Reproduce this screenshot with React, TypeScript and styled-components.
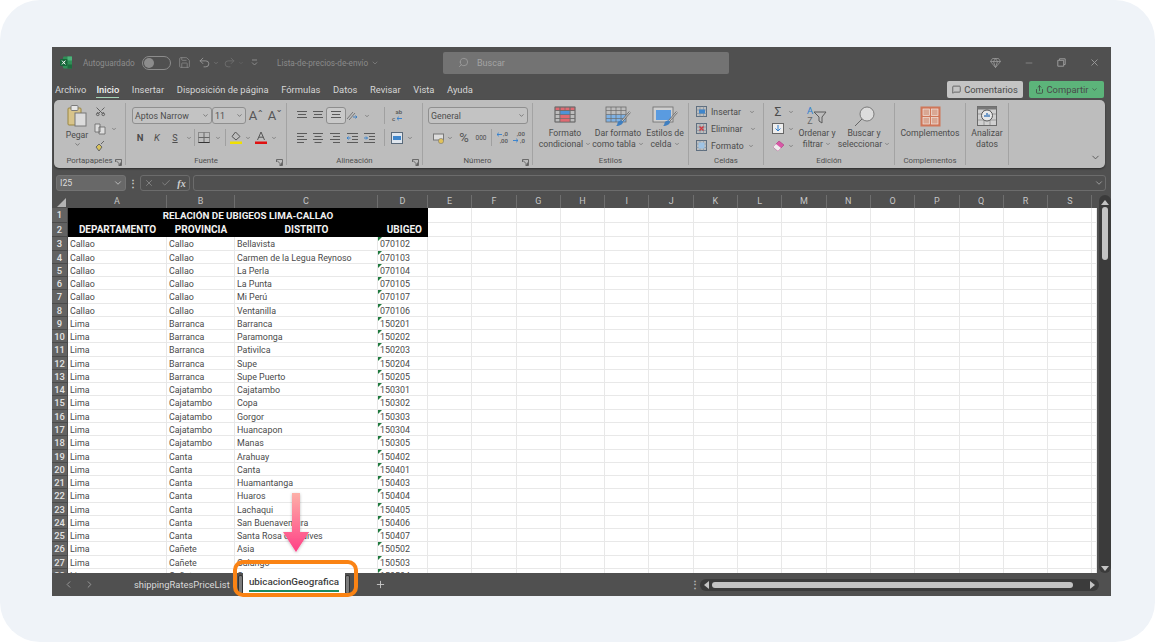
import styled, { createGlobalStyle } from 'styled-components';
import {
  ChevronDown,
  ChevronLeft,
  ChevronRight,
  Check,
  Minus,
  MessageSquare,
  Plus,
  Redo2,
  Save,
  Scissors,
  Search,
  Share,
  Undo2,
  X,
} from 'lucide-react';

const UI_FONT = `"Roboto", "Noto Sans", sans-serif`;

const GlobalStyle = createGlobalStyle`
  html, body { margin: 0; padding: 0; background: #fff; }
  * { box-sizing: border-box; }
  #root { width: 1155px; height: 642px; overflow: hidden; }
`;

const Card = styled.div`
  width: 1155px;
  height: 642px;
  padding: 47px 44px 46px 52px;
  background: #eff3f8;
  border-radius: 40px;
  position: relative;
`;

const Excel = styled.div`
  width: 1059px;
  height: 549px;
  display: flex;
  flex-direction: column;
  background: #505050;
  font-family: ${UI_FONT};
  overflow: hidden;
`;

/* title bar */
const TitleBar = styled.div`
  height: 31px;
  flex: none;
  display: flex;
  align-items: center;
`;
const TitleLeft = styled.div`
  width: 391px;
  display: flex;
  align-items: center;
  padding-left: 8px;
  color: #8c8c8c;
`;
const AutoSave = styled.span`
  width: 59px;
  margin-left: 11px;
  font-size: 8.2px;
  white-space: nowrap;
`;
const Toggle = styled.span`
  width: 29px;
  height: 14px;
  flex: none;
  border: 1px solid #8c8c8c;
  border-radius: 7px;
  padding: 1px;
  display: flex;
  &::before {
    content: '';
    width: 10px;
    height: 10px;
    border-radius: 50%;
    background: #8c8c8c;
  }
`;
const DocName = styled.span`
  margin-left: 14px;
  font-size: 8.2px;
  color: #8a8a8a;
  white-space: nowrap;
  display: flex;
  align-items: center;
  gap: 3px;
`;
const SearchBox = styled.div`
  width: 286px;
  height: 22px;
  background: #737373;
  border-radius: 2px;
  display: flex;
  align-items: center;
  gap: 8px;
  padding-left: 15px;
  font-size: 9px;
  color: #a4a4a4;
`;
const SearchIcon = styled(Search)`
  transform: scaleX(-1);
`;
const TitleRight = styled.div`
  flex: 1;
  display: flex;
  justify-content: flex-end;
  color: #9a9a9a;
`;

/* menu tabs */
const MenuBar = styled.div`
  height: 22px;
  flex: none;
  display: flex;
  align-items: center;
  padding: 0 7px 0 3px;
`;
const MenuTab = styled.span<{ $active?: boolean }>`
  margin-right: 12.6px;
  height: 17px;
  font-size: 9.4px;
  line-height: 17px;
  white-space: nowrap;
  color: ${(p) => (p.$active ? '#f0f0f0' : '#d6d6d6')};
  font-weight: ${(p) => (p.$active ? 500 : 400)};
  border-bottom: ${(p) => (p.$active ? '1px solid #a4d3b5' : 'none')};
  &:first-child {
    margin-right: 10px;
  }
`;
const MenuActions = styled.div`
  margin-left: auto;
  display: flex;
  gap: 6px;
`;
const MenuButton = styled.div<{ $green?: boolean }>`
  height: 17px;
  width: ${(p) => (p.$green ? 75 : 76)}px;
  border-radius: 2px;
  display: flex;
  align-items: center;
  justify-content: center;
  gap: 3px;
  font-size: 9.4px;
  color: #4a4a4a;
  background: ${(p) => (p.$green ? '#5cb47a' : '#c4c4c4')};
`;

/* ribbon */
const Ribbon = styled.div`
  height: 68px;
  flex: none;
  margin: 0 6px 0 2px;
  background: #bdbdbd;
  border-radius: 5px;
  display: flex;
  color: #4c4c4c;
  box-shadow: 0 1px 2px rgba(0, 0, 0, 0.45);
`;
const Group = styled.section<{ $w: number }>`
  width: ${(p) => p.$w}px;
  flex: none;
  margin: 3px 0;
  border-right: 1px solid #a3a3a3;
  display: flex;
  flex-direction: column;
  position: relative;
`;
const GroupBody = styled.div`
  flex: 1;
  min-height: 0;
  display: flex;
`;
const GroupLabel = styled.div`
  height: 14px;
  flex: none;
  margin-bottom: -3px;
  text-align: center;
  font-size: 7.8px;
  line-height: 13px;
  color: #4f4f4f;
`;
const Launcher = styled.svg`
  position: absolute;
  right: 3px;
  bottom: -1px;
  width: 7px;
  height: 7px;
`;
const Rows = styled.div<{ $pad?: number }>`
  display: flex;
  flex-direction: column;
  gap: 5px;
  padding: 4px 0 0 ${(p) => p.$pad ?? 0}px;
`;
const Row = styled.div<{ $pad?: number }>`
  height: 17px;
  display: flex;
  align-items: center;
  padding-left: ${(p) => p.$pad ?? 0}px;
`;
const Slot = styled.span<{ $w: number; $on?: boolean }>`
  width: ${(p) => p.$w}px;
  height: 17px;
  flex: none;
  display: flex;
  align-items: center;
  justify-content: center;
  font-size: 9px;
  color: #4c4c4c;
  ${(p) =>
    p.$on
      ? 'background:#c9c9c9;border:1px solid #8d8d8d;border-radius:3px;'
      : ''}
`;
const Sep = styled.span<{ $w: number }>`
  width: ${(p) => p.$w}px;
  height: 17px;
  flex: none;
  display: flex;
  justify-content: center;
  &::before {
    content: '';
    width: 1px;
    background: #a0a0a0;
  }
`;
const Select = styled.div<{ $w: number }>`
  width: ${(p) => p.$w}px;
  height: 17px;
  flex: none;
  border: 1px solid #8f8f8f;
  border-radius: 3px;
  background: #c3c3c3;
  display: flex;
  align-items: center;
  justify-content: space-between;
  padding: 0 2px;
  font-size: 8.8px;
  white-space: nowrap;
  color: #4c4c4c;
`;
const BoldLetter = styled.b<{ $serif?: boolean }>`
  font-size: 9.5px;
  font-weight: ${(p) => (p.$serif ? 400 : 700)};
  font-style: ${(p) => (p.$serif ? 'italic' : 'normal')};
`;
const Glyph = styled.span`
  font-size: 13px;
  color: #555;
`;
const TinyStack = styled.span`
  display: flex;
  flex-direction: column;
  align-items: flex-end;
  font-size: 6px;
  line-height: 6.5px;
  font-weight: 500;
  color: #555;
`;
const TinyRow = styled.span`
  display: flex;
  align-items: center;
  gap: 1px;
`;
const Thousands = styled.span`
  font-size: 6.5px;
`;
const SortLetters = styled.span`
  display: flex;
  flex-direction: column;
  align-items: center;
  font-family: 'Noto Sans', sans-serif;
  font-size: 9.5px;
  line-height: 10px;
`;
const SortLetter = styled.span<{ $blue?: boolean }>`
  color: ${(p) => (p.$blue ? '#2f7fd0' : '#666')};
`;
const BigButton = styled.div<{ $w: number }>`
  width: ${(p) => p.$w}px;
  flex: none;
  display: flex;
  flex-direction: column;
  align-items: center;
  padding-top: 3px;
`;
const BigIcon = styled.div`
  height: 22px;
  flex: none;
  display: flex;
  align-items: flex-start;
  justify-content: center;
`;
const BigText = styled.div`
  font-size: 8.7px;
  line-height: 11.3px;
  text-align: center;
  white-space: nowrap;
  color: #4c4c4c;
  display: flex;
  flex-direction: column;
  align-items: center;
`;
const CellAction = styled.div`
  height: 17.5px;
  display: flex;
  align-items: center;
  font-size: 8.7px;
  white-space: nowrap;
  color: #4c4c4c;
  gap: 4px;
`;
const PasteButton = styled.div`
  width: 30px;
  margin-left: 8px;
  flex: none;
  display: flex;
  flex-direction: column;
  align-items: center;
  font-size: 8.7px;
  padding-top: 2px;
  color: #4c4c4c;
`;
const PasteLabel = styled.span`
  margin-top: 3px;
  line-height: 11px;
`;
const CutIcon = styled(Scissors)`
  transform: rotate(-90deg);
`;
const StackColumn = styled.div<{ $pad?: number; $w?: number }>`
  width: ${(p) => (p.$w ? `${p.$w}px` : 'auto')};
  flex: none;
  display: flex;
  flex-direction: column;
  padding-left: ${(p) => p.$pad ?? 0}px;
`;
const Sigma = styled.span`
  font-size: 12px;
`;
const RibbonEnd = styled.div`
  flex: 1;
  display: flex;
  align-items: flex-end;
  justify-content: flex-end;
  padding: 0 4px 5px 0;
`;

/* formula bar */
const FormulaBar = styled.div`
  height: 27px;
  flex: none;
  display: flex;
  align-items: flex-start;
  padding: 7px 5px 0 4px;
  color: #8a8a8a;
`;
const NameBox = styled.div`
  width: 70px;
  height: 16px;
  flex: none;
  background: #686868;
  border: 1px solid #737373;
  border-radius: 3px;
  display: flex;
  align-items: center;
  justify-content: space-between;
  padding: 0 2px 0 3px;
  font-size: 8.8px;
  color: #dcdcdc;
`;
const DotsSlot = styled.div`
  width: 14px;
  height: 16px;
  flex: none;
  display: flex;
  align-items: center;
  justify-content: center;
  color: #c8c8c8;
  font-size: 10px;
  font-weight: 700;
`;
const FormulaActions = styled.div`
  width: 50px;
  height: 16px;
  flex: none;
  border: 1px solid #6c6c6c;
  border-radius: 3px;
  display: flex;
  align-items: center;
  justify-content: space-around;
  font-family: 'Liberation Serif', serif;
  font-style: italic;
  font-weight: 700;
  font-size: 10px;
  color: #d0d0d0;
`;
const FormulaInput = styled.div`
  flex: 1;
  height: 16px;
  margin-left: 3px;
  border: 1px solid #6c6c6c;
  border-radius: 3px;
  display: flex;
  align-items: center;
  justify-content: flex-end;
  padding-right: 1px;
`;

/* sheet */
const SheetArea = styled.div`
  flex: 1;
  min-height: 0;
  display: flex;
`;
const Sheet = styled.div`
  flex: 1;
  min-width: 0;
  overflow: hidden;
`;
const COLUMNS = '16px 99px 68px 143px 50px repeat(15, 44.3px) 5px';
const HeaderRow = styled.div`
  height: 13px;
  display: grid;
  grid-template-columns: ${COLUMNS};
  background: #505050;
`;
const Corner = styled.div`
  position: relative;
  &::after {
    content: '';
    position: absolute;
    right: 2px;
    bottom: 1px;
    border-left: 9px solid transparent;
    border-bottom: 9px solid #b5b5b5;
  }
`;
const ColHead = styled.div`
  border-right: 1px solid #6e6e6e;
  text-align: center;
  font-size: 9px;
  line-height: 13px;
  color: #c6c6c6;
`;
const SheetRow = styled.div<{ $h: number }>`
  height: ${(p) => p.$h}px;
  display: grid;
  grid-template-columns: ${COLUMNS};
  grid-template-rows: minmax(0, 1fr);
`;
const RowHead = styled.div`
  background: #626262;
  border-bottom: 1px solid #4a4a4a;
  border-right: 1px solid #4a4a4a;
  color: #e2e2e2;
  font-size: 9.4px;
  font-weight: 500;
  line-height: 13px;
  text-align: center;
`;
const Cell = styled.div<{ $flag?: boolean }>`
  background: #fff;
  border-right: 1px solid #e8e8e8;
  border-bottom: 1px solid #e8e8e8;
  font-size: 8.9px;
  line-height: 14.5px;
  padding-left: 2px;
  color: #4a4a4a;
  white-space: nowrap;
  overflow: ${(p) => (p.$flag ? 'hidden' : 'visible')};
  position: relative;
  &::before {
    content: '';
    display: ${(p) => (p.$flag ? 'block' : 'none')};
    position: absolute;
    left: 0;
    top: 0;
    border-top: 4px solid #1f7a3e;
    border-right: 4px solid transparent;
  }
`;
const TitleCell = styled.div`
  grid-column: 2 / 6;
  background: #000;
  color: #f2f2f2;
  text-align: center;
  font-size: 9.8px;
  font-weight: 700;
  line-height: 15px;
`;
const HeadCell = styled.div<{ $right?: boolean }>`
  background: #000;
  color: #f2f2f2;
  text-align: ${(p) => (p.$right ? 'right' : 'center')};
  padding-right: ${(p) => (p.$right ? 6 : 0)}px;
  font-size: 10px;
  font-weight: 700;
  line-height: 14px;
  white-space: nowrap;
`;
const VScroll = styled.div`
  width: 14px;
  flex: none;
  padding-left: 2px;
`;
const VTrack = styled.div`
  height: 100%;
  background: #3b3b3b;
  border-radius: 6px;
  display: flex;
  flex-direction: column;
  align-items: center;
  padding: 5px 0 2px;
  gap: 2px;
`;
const VThumb = styled.div`
  width: 6px;
  height: 53px;
  border-radius: 3px;
  background: #c4c4c4;
`;
const ScrollArrow = styled.span<{ $dir: 'up' | 'down' | 'left' | 'right' }>`
  width: 0;
  height: 0;
  flex: none;
  ${(p) => {
    if (p.$dir === 'up') return 'border-left:4px solid transparent;border-right:4px solid transparent;border-bottom:5px solid #c4c4c4;';
    if (p.$dir === 'down') return 'border-left:4px solid transparent;border-right:4px solid transparent;border-top:5px solid #c4c4c4;margin-top:auto;';
    if (p.$dir === 'left') return 'border-top:4px solid transparent;border-bottom:4px solid transparent;border-right:5px solid #c4c4c4;';
    return 'border-top:4px solid transparent;border-bottom:4px solid transparent;border-left:5px solid #c4c4c4;margin-left:auto;';
  }}
`;

/* bottom bar */
const TabBar = styled.div`
  height: 23px;
  flex: none;
  display: flex;
  align-items: flex-end;
  background: #505050;
  color: #9c9c9c;
  position: relative;
`;
const NavArrows = styled.div`
  width: 82px;
  height: 23px;
  padding-left: 11px;
  display: flex;
  align-items: center;
  gap: 10px;
`;
const SheetTab = styled.div`
  width: 95px;
  height: 23px;
  font-size: 9.4px;
  line-height: 23px;
  color: #dadada;
  white-space: nowrap;
`;
const TabHandle = styled.span`
  width: 5px;
  height: 19px;
  margin-bottom: 2px;
  flex: none;
  background: #7c7c7c;
  border: 1px solid #333;
  border-radius: 2px;
`;
const ActiveTab = styled.div`
  width: 102px;
  height: 26px;
  flex: none;
  margin-top: -3px;
  padding: 5px 5px 0;
  background: #fff;
  color: #3e3e3e;
  font-size: 9.8px;
  font-weight: 500;
  line-height: 14px;
  text-align: center;
  white-space: nowrap;
  z-index: 1;
  display: flex;
  flex-direction: column;
  align-items: center;
  &::after {
    content: '';
    width: 90px;
    height: 2px;
    margin-top: 1px;
    background: #1b8a5f;
  }
`;
const AddSheet = styled.div`
  width: 33px;
  height: 23px;
  margin-left: 14px;
  display: flex;
  align-items: center;
  justify-content: center;
  color: #c8c8c8;
`;
const HScrollDots = styled.div`
  margin-left: auto;
  width: 11px;
  height: 23px;
  display: flex;
  align-items: center;
  justify-content: center;
  font-size: 10px;
  font-weight: 700;
  color: #b8b8b8;
`;
const HScroll = styled.div`
  width: 399px;
  height: 12px;
  margin: 0 12px 5px 0;
  background: #3b3b3b;
  border-radius: 6px;
  display: flex;
  align-items: center;
  padding: 0 4px;
  gap: 3px;
`;
const HThumb = styled.div`
  width: 361px;
  height: 6px;
  border-radius: 3px;
  background: #c4c4c4;
`;

/* annotation over the screenshot */
const Highlight = styled.div`
  position: absolute;
  left: 233px;
  top: 560px;
  width: 125px;
  height: 37px;
  border: 4px solid #fa8314;
  border-radius: 10px;
  z-index: 3;
`;
const ArrowMark = styled.svg`
  position: absolute;
  left: 281px;
  top: 491px;
  z-index: 4;
  overflow: visible;
`;

/* icons */
const Chev = ({ s = 7, c = '#4c4c4c' }: { s?: number; c?: string }) => (
  <ChevronDown size={s} color={c} strokeWidth={2} />
);

const Lines = ({ w, align = 'left' }: { w: number[]; align?: 'left' | 'center' | 'right' }) => (
  <svg width="12" height="11" viewBox="0 0 12 11">
    {w.map((len, i) => {
      const x = align === 'left' ? 1 : align === 'right' ? 11 - len : 6 - len / 2;
      return <rect key={i} x={x} y={1 + i * 3} width={len} height="1" fill="#5a5a5a" />;
    })}
  </svg>
);

const IndentLines = ({ flip }: { flip?: boolean }) => (
  <svg width="13" height="11" viewBox="0 0 13 11">
    <rect x="1" y="1" width="11" height="1" fill="#5a5a5a" />
    <rect x="6" y="4" width="6" height="1" fill="#5a5a5a" />
    <rect x="6" y="7" width="6" height="1" fill="#5a5a5a" />
    <rect x="1" y="10" width="11" height="1" fill="#5a5a5a" />
    <path d={flip ? 'M1 6h3.5M3 4.5 4.5 6 3 7.5' : 'M4.5 6H1M2.5 4.5 1 6l1.5 1.5'} stroke="#2f7fd0" strokeWidth="0.9" fill="none" />
  </svg>
);

const SmallArrow = ({ flip }: { flip?: boolean }) => (
  <svg width="6" height="5" viewBox="0 0 6 5">
    <path d={flip ? 'M0 2.5h5M3.2 .8 5 2.5 3.2 4.2' : 'M6 2.5H1M2.8 .8 1 2.5l1.8 1.7'} stroke="#2f7fd0" strokeWidth="0.9" fill="none" />
  </svg>
);

const TableGrid = ({ fill, y, h, stroke = '#6c6c6c' }: { fill: string; y: number; h: number; stroke?: string }) => (
  <>
    <rect x="1" y={y} width="20" height={h} fill={fill} />
    <rect x="1" y="1" width="20" height="15" fill="none" stroke={stroke} strokeWidth="0.8" />
    <path d="M1 4.5h20M1 8.5h20M1 12.5h20M6 1v15M11 1v15M16 1v15" stroke={stroke} strokeWidth="0.7" fill="none" />
  </>
);

const Brush = () => (
  <>
    <path d="M25 6 17 15" stroke="#6a6a6a" strokeWidth="2" />
    <path d="M25 6 17 15" stroke="#e8e8e8" strokeWidth="0.8" />
    <path d="M13 16c2-2 5-2 5 0s-3 4-7 4c2-1 1-3 2-4z" fill="#3f7fc0" />
  </>
);

const ExcelLogo = () => (
  <svg width="12" height="13" viewBox="0 0 12 13">
    <rect x="3" y="0.5" width="9" height="12" rx="1" fill="#2f8f57" />
    <rect x="7.5" y="0.5" width="4.5" height="4" fill="#4cb37a" />
    <rect x="7.5" y="8.5" width="4.5" height="4" fill="#1c6b3d" />
    <rect x="0" y="3" width="7.5" height="7" rx="1" fill="#17663a" />
    <path d="M2 4.6 5.4 8.4M5.4 4.6 2 8.4" stroke="#fff" strokeWidth="1" />
  </svg>
);

const Launch = () => (
  <Launcher viewBox="0 0 7 7">
    <path d="M0.5 3V0.5H6.5V6.5H4M1 1.5 5.5 6M5.5 3.5V6H3" stroke="#555" strokeWidth="0.8" fill="none" />
  </Launcher>
);

const SheetIcon = ({ kind }: { kind: 'ins' | 'del' | 'fmt' }) => (
  <svg width="11" height="11" viewBox="0 0 11 11">
    <rect x="0.5" y="0.5" width="10" height="10" fill="none" stroke="#5f6f80" />
    <path d="M0.5 4h10M0.5 7.5h10M4 .5v10M7.5 .5v10" stroke="#7a8a99" strokeWidth="0.6" />
    {kind === 'ins' && <rect x="3" y="3.5" width="6" height="4" fill="#3f86cc" />}
    {kind === 'del' && <path d="M3.5 3.5 7.5 7.5M7.5 3.5 3.5 7.5" stroke="#d0383f" strokeWidth="1.4" />}
    {kind === 'fmt' && <rect x="2.5" y="2.5" width="6" height="6" fill="#9fc3e4" />}
  </svg>
);

type Place = { a: string; b: string; c: string; d: string };

const PLACES: Place[] = [
  ['Callao', 'Callao', 'Bellavista', '070102'],
  ['Callao', 'Callao', 'Carmen de la Legua Reynoso', '070103'],
  ['Callao', 'Callao', 'La Perla', '070104'],
  ['Callao', 'Callao', 'La Punta', '070105'],
  ['Callao', 'Callao', 'Mi Perú', '070107'],
  ['Callao', 'Callao', 'Ventanilla', '070106'],
  ['Lima', 'Barranca', 'Barranca', '150201'],
  ['Lima', 'Barranca', 'Paramonga', '150202'],
  ['Lima', 'Barranca', 'Pativilca', '150203'],
  ['Lima', 'Barranca', 'Supe', '150204'],
  ['Lima', 'Barranca', 'Supe Puerto', '150205'],
  ['Lima', 'Cajatambo', 'Cajatambo', '150301'],
  ['Lima', 'Cajatambo', 'Copa', '150302'],
  ['Lima', 'Cajatambo', 'Gorgor', '150303'],
  ['Lima', 'Cajatambo', 'Huancapon', '150304'],
  ['Lima', 'Cajatambo', 'Manas', '150305'],
  ['Lima', 'Canta', 'Arahuay', '150402'],
  ['Lima', 'Canta', 'Canta', '150401'],
  ['Lima', 'Canta', 'Huamantanga', '150403'],
  ['Lima', 'Canta', 'Huaros', '150404'],
  ['Lima', 'Canta', 'Lachaqui', '150405'],
  ['Lima', 'Canta', 'San Buenaventura', '150406'],
  ['Lima', 'Canta', 'Santa Rosa de Quives', '150407'],
  ['Lima', 'Cañete', 'Asia', '150502'],
  ['Lima', 'Cañete', 'Calango', '150503'],
  ['Lima', 'Cañete', 'Cerro Azul', '150504'],
].map(([a, b, c, d]) => ({ a, b, c, d }));

const COLUMN_LETTERS = 'ABCDEFGHIJKLMNOPQRS'.split('');
const EMPTY_COLUMNS = Array.from({ length: 16 });

export default function App() {
  return (
    <>
      <GlobalStyle />
      <Card>
        <Excel>
          <TitleBar>
            <TitleLeft>
              <ExcelLogo />
              <AutoSave>Autoguardado</AutoSave>
              <Toggle />
              <Slot $w={26}><Save size={13} color="#8c8c8c" strokeWidth={1.4} /></Slot>
              <Slot $w={14}><Undo2 size={13} color="#9a9a9a" strokeWidth={1.6} /></Slot>
              <Slot $w={10}><Chev s={6} c="#8c8c8c" /></Slot>
              <Slot $w={16}><Redo2 size={13} color="#6f6f6f" strokeWidth={1.6} /></Slot>
              <Slot $w={8}><Chev s={6} c="#6f6f6f" /></Slot>
              <Slot $w={18}>
                <svg width="7" height="7" viewBox="0 0 7 7">
                  <path d="M1 1h5M1 3.5 3.5 6 6 3.5" stroke="#8c8c8c" fill="none" />
                </svg>
              </Slot>
              <DocName>Lista-de-precios-de-envío <Chev s={8} c="#8a8a8a" /></DocName>
            </TitleLeft>
            <SearchBox>
              <SearchIcon size={11} color="#9a9a9a" />
              Buscar
            </SearchBox>
            <TitleRight>
              <Slot $w={33}>
                <svg width="11" height="10" viewBox="0 0 11 10">
                  <path d="M2.5 0.5h6l2 3-5 6-5-6zM0.5 3.5h10M3.5 3.5l2 6 2-6M3.5 3.5l2-3 2 3" stroke="#9a9a9a" strokeWidth="0.8" fill="none" />
                </svg>
              </Slot>
              <Slot $w={33}><Minus size={10} color="#8c8c8c" /></Slot>
              <Slot $w={33}>
                <svg width="9" height="9" viewBox="0 0 9 9">
                  <path d="M2.5 2V.8h5.7v5.7H7M.8 2.3h5.9v5.9H.8z" stroke="#9a9a9a" fill="none" />
                </svg>
              </Slot>
              <Slot $w={33}><X size={11} color="#9a9a9a" /></Slot>
            </TitleRight>
          </TitleBar>

          <MenuBar>
            <MenuTab>Archivo</MenuTab>
            <MenuTab $active>Inicio</MenuTab>
            <MenuTab>Insertar</MenuTab>
            <MenuTab>Disposición de página</MenuTab>
            <MenuTab>Fórmulas</MenuTab>
            <MenuTab>Datos</MenuTab>
            <MenuTab>Revisar</MenuTab>
            <MenuTab>Vista</MenuTab>
            <MenuTab>Ayuda</MenuTab>
            <MenuActions>
              <MenuButton><MessageSquare size={9} color="#4a4a4a" /> Comentarios</MenuButton>
              <MenuButton $green><Share size={9} color="#3f3f3f" /> Compartir <Chev s={7} c="#3f3f3f" /></MenuButton>
            </MenuActions>
          </MenuBar>

          <Ribbon>
            <Group $w={72}>
              <GroupBody>
                <PasteButton>
                  <svg width="20" height="22" viewBox="0 0 20 22">
                    <rect x="1" y="3" width="13" height="17" rx="1" fill="#d8c48a" stroke="#9a8640" />
                    <rect x="4" y="0.5" width="7" height="5" rx="1" fill="#e6e6e6" stroke="#7a7a7a" />
                    <rect x="8" y="8" width="11" height="13" fill="#dcdcdc" stroke="#777" />
                  </svg>
                  <PasteLabel>Pegar</PasteLabel>
                  <Chev />
                </PasteButton>
                <StackColumn>
                  <Slot $w={16}><CutIcon size={11} color="#5a5a5a" /></Slot>
                  <Row>
                    <Slot $w={16}>
                      <svg width="12" height="12" viewBox="0 0 12 12">
                        <path d="M1 1h5v8H1zM5 4h6v7H5z" fill="#ddd" stroke="#666" strokeWidth="0.8" />
                      </svg>
                    </Slot>
                    <Slot $w={12}><Chev s={6} /></Slot>
                  </Row>
                  <Slot $w={16}>
                    <svg width="12" height="12" viewBox="0 0 12 12">
                      <path d="M2 7l3-3 3 3-3 4zM7 4l3-3" stroke="#666" fill="#d9c25a" strokeWidth="1" />
                    </svg>
                  </Slot>
                </StackColumn>
              </GroupBody>
              <GroupLabel>Portapapeles</GroupLabel>
              <Launch />
            </Group>

            <Group $w={161}>
              <GroupBody>
                <Rows $pad={6}>
                  <Row>
                    <Select $w={80}>Aptos Narrow <Chev /></Select>
                    <Select $w={34}>11 <Chev /></Select>
                    <Slot $w={20}><Glyph>Aˆ</Glyph></Slot>
                    <Slot $w={18}><Glyph>Aˇ</Glyph></Slot>
                  </Row>
                  <Row>
                    <Slot $w={16}><BoldLetter>N</BoldLetter></Slot>
                    <Slot $w={18}><BoldLetter $serif>K</BoldLetter></Slot>
                    <Slot $w={18}><u>S</u></Slot>
                    <Slot $w={9}><Chev s={6} /></Slot>
                    <Sep $w={3} />
                    <Slot $w={16}>
                      <svg width="12" height="11" viewBox="0 0 12 11">
                        <rect x="0.5" y="0.5" width="11" height="10" fill="none" stroke="#8a8a8a" />
                        <path d="M0.5 5.5h11M6 .5v10" stroke="#666" />
                        <path d="M0.5 10.5h11" stroke="#333" />
                      </svg>
                    </Slot>
                    <Slot $w={11}><Chev s={6} /></Slot>
                    <Sep $w={5} />
                    <Slot $w={16}>
                      <svg width="12" height="13" viewBox="0 0 12 13">
                        <path d="M5.5 1 10 5.5 6 9 2 5.5z" fill="none" stroke="#555" />
                        <rect x="0" y="10.5" width="12" height="2.5" fill="#f0e000" />
                      </svg>
                    </Slot>
                    <Slot $w={8}><Chev s={6} /></Slot>
                    <Slot $w={18}>
                      <svg width="12" height="13" viewBox="0 0 12 13">
                        <path d="M2.5 9 6 1l3.5 8M3.8 6.2h4.4" fill="none" stroke="#555" />
                        <rect x="0" y="10.5" width="12" height="2.5" fill="#e01010" />
                      </svg>
                    </Slot>
                    <Slot $w={8}><Chev s={6} /></Slot>
                  </Row>
                </Rows>
              </GroupBody>
              <GroupLabel>Fuente</GroupLabel>
              <Launch />
            </Group>

            <Group $w={136}>
              <GroupBody>
                <Rows $pad={7}>
                  <Row>
                    <Slot $w={16}><Lines w={[10, 8, 10]} align="center" /></Slot>
                    <Slot $w={16}><Lines w={[10, 8, 10]} align="center" /></Slot>
                    <Slot $w={20} $on><Lines w={[10, 8, 10]} align="center" /></Slot>
                    <Slot $w={12}>
                      <svg width="12" height="11" viewBox="0 0 12 11">
                        <path d="M1 9 7 2M3 10l6-7" stroke="#777" />
                        <path d="M7 7h4M9.5 5.5 11 7 9.5 8.5" stroke="#3f7fc0" fill="none" />
                      </svg>
                    </Slot>
                    <Slot $w={18}><Chev s={6} /></Slot>
                    <Sep $w={16} />
                    <Slot $w={10}>
                      <TinyStack>
                        ab
                        <TinyRow>c<SmallArrow /></TinyRow>
                      </TinyStack>
                    </Slot>
                  </Row>
                  <Row>
                    <Slot $w={16}><Lines w={[10, 7, 10, 7]} /></Slot>
                    <Slot $w={16}><Lines w={[10, 7, 10, 7]} align="center" /></Slot>
                    <Slot $w={18}><Lines w={[10, 7, 10, 7]} align="right" /></Slot>
                    <Slot $w={16}><IndentLines /></Slot>
                    <Slot $w={18}><IndentLines flip /></Slot>
                    <Sep $w={12} />
                    <Slot $w={14}>
                      <svg width="12" height="12" viewBox="0 0 12 12">
                        <rect x="0.5" y="0.5" width="11" height="11" fill="#dfe6ee" stroke="#5a6a7a" />
                        <rect x="2" y="4" width="8" height="4" fill="#3f86cc" />
                      </svg>
                    </Slot>
                    <Slot $w={12}><Chev s={6} /></Slot>
                  </Row>
                </Rows>
              </GroupBody>
              <GroupLabel>Alineación</GroupLabel>
              <Launch />
            </Group>

            <Group $w={110}>
              <GroupBody>
                <Rows $pad={5}>
                  <Row>
                    <Select $w={100}>General <Chev /></Select>
                  </Row>
                  <Row>
                    <Slot $w={3} />
                    <Slot $w={16}>
                      <svg width="12" height="12" viewBox="0 0 12 12">
                        <rect x="0.5" y="2" width="10" height="6" fill="#ddd" stroke="#777" />
                        <circle cx="8" cy="9" r="2.6" fill="#e2c25a" stroke="#777" strokeWidth="0.6" />
                      </svg>
                    </Slot>
                    <Slot $w={6}><Chev s={6} /></Slot>
                    <Slot $w={22}><Glyph>%</Glyph></Slot>
                    <Slot $w={12}><Thousands>000</Thousands></Slot>
                    <Sep $w={8} />
                    <Slot $w={14}>
                      <TinyStack>
                        <TinyRow><SmallArrow />,0</TinyRow>
                        ,00
                      </TinyStack>
                    </Slot>
                    <Slot $w={20}>
                      <TinyStack>
                        ,00
                        <TinyRow><SmallArrow flip />,0</TinyRow>
                      </TinyStack>
                    </Slot>
                  </Row>
                </Rows>
              </GroupBody>
              <GroupLabel>Número</GroupLabel>
              <Launch />
            </Group>

            <Group $w={156}>
              <GroupBody>
                <Slot $w={2} />
                <BigButton $w={60}>
                  <BigIcon>
                    <svg width="22" height="17" viewBox="0 0 22 17">
                      <TableGrid fill="#e06a72" y={1} h={4} />
                      <rect x="6" y="5" width="10" height="4" fill="#4f93d8" />
                      <rect x="6" y="9" width="10" height="7" fill="#e06a72" />
                      <path d="M1 1h20v15H1zM1 4.5h20M1 8.5h20M1 12.5h20M6 1v15M16 1v15" stroke="#6c6c6c" strokeWidth="0.7" fill="none" />
                    </svg>
                  </BigIcon>
                  <BigText>Formato<span>condicional <Chev s={6} /></span></BigText>
                </BigButton>
                <BigButton $w={46}>
                  <BigIcon>
                    <svg width="26" height="22" viewBox="0 0 26 22">
                      <TableGrid fill="#7fb2e5" y={8.5} h={7.5} />
                      <Brush />
                    </svg>
                  </BigIcon>
                  <BigText>Dar formato<span>como tabla <Chev s={6} /></span></BigText>
                </BigButton>
                <BigButton $w={48}>
                  <BigIcon>
                    <svg width="26" height="22" viewBox="0 0 26 22">
                      <rect x="1" y="1" width="20" height="15" fill="#cfcfcf" stroke="#6c6c6c" strokeWidth="0.8" />
                      <rect x="4" y="4" width="15" height="10" fill="#5a9be0" />
                      <Brush />
                    </svg>
                  </BigIcon>
                  <BigText>Estilos de<span>celda <Chev s={6} /></span></BigText>
                </BigButton>
              </GroupBody>
              <GroupLabel>Estilos</GroupLabel>
            </Group>

            <Group $w={75}>
              <GroupBody>
                <StackColumn $pad={7}>
                  <CellAction><SheetIcon kind="ins" /> Insertar <Slot $w={14}><Chev s={6} /></Slot></CellAction>
                  <CellAction><SheetIcon kind="del" /> Eliminar <Slot $w={14}><Chev s={6} /></Slot></CellAction>
                  <CellAction><SheetIcon kind="fmt" /> Formato <Chev s={6} /></CellAction>
                </StackColumn>
              </GroupBody>
              <GroupLabel>Celdas</GroupLabel>
            </Group>

            <Group $w={131}>
              <GroupBody>
                <StackColumn $pad={6} $w={32}>
                  <Row>
                    <Slot $w={16}><Sigma>Σ</Sigma></Slot>
                    <Slot $w={10}><Chev s={6} /></Slot>
                  </Row>
                  <Row>
                    <Slot $w={16}>
                      <svg width="12" height="11" viewBox="0 0 12 11">
                        <rect x="0.5" y="0.5" width="11" height="10" fill="#eee" stroke="#666" />
                        <path d="M6 2v6M3.5 5.5 6 8l2.5-2.5" stroke="#2f7fd0" fill="none" />
                      </svg>
                    </Slot>
                    <Slot $w={10}><Chev s={6} /></Slot>
                  </Row>
                  <Row>
                    <Slot $w={16}>
                      <svg width="13" height="12" viewBox="0 0 13 12">
                        <path d="M1 7 7 1l5 4-6 6z" fill="#d958a6" stroke="#a83c80" strokeWidth="0.6" />
                        <path d="M4 4l5 4-3 3-5-4z" fill="#eee" />
                      </svg>
                    </Slot>
                    <Slot $w={10}><Chev s={6} /></Slot>
                  </Row>
                </StackColumn>
                <BigButton $w={42}>
                  <BigIcon>
                    <SortLetters>
                      <SortLetter $blue>A</SortLetter>
                      <SortLetter>Z</SortLetter>
                    </SortLetters>
                    <svg width="14" height="20" viewBox="0 0 14 20">
                      <path d="M1 6h12L9 11v6l-3-2v-4z" fill="none" stroke="#5a5a5a" />
                    </svg>
                  </BigIcon>
                  <BigText>Ordenar y<span>filtrar <Chev s={6} /></span></BigText>
                </BigButton>
                <BigButton $w={52}>
                  <BigIcon>
                    <svg width="22" height="21" viewBox="0 0 22 21">
                      <circle cx="14" cy="8" r="7" fill="#dcdcdc" stroke="#666" strokeWidth="0.8" />
                      <path d="M9 13 2 20" stroke="#666" strokeWidth="1" />
                    </svg>
                  </BigIcon>
                  <BigText>Buscar y<span>seleccionar <Chev s={6} /></span></BigText>
                </BigButton>
              </GroupBody>
              <GroupLabel>Edición</GroupLabel>
            </Group>

            <Group $w={71}>
              <GroupBody>
                <BigButton $w={70}>
                  <BigIcon>
                    <svg width="21" height="21" viewBox="0 0 21 21">
                      <rect x="0.5" y="0.5" width="20" height="20" fill="#cf7658" />
                      <rect x="3" y="3" width="6.5" height="6.5" fill="#d9a793" stroke="#f2e5df" strokeWidth="0.7" />
                      <rect x="11.5" y="3" width="6.5" height="6.5" fill="#d9a793" stroke="#f2e5df" strokeWidth="0.7" />
                      <rect x="3" y="11.5" width="6.5" height="6.5" fill="#d9a793" stroke="#f2e5df" strokeWidth="0.7" />
                      <rect x="11.5" y="11.5" width="6.5" height="6.5" fill="#d9a793" stroke="#f2e5df" strokeWidth="0.7" />
                    </svg>
                  </BigIcon>
                  <BigText>Complementos</BigText>
                </BigButton>
              </GroupBody>
              <GroupLabel>Complementos</GroupLabel>
            </Group>

            <Group $w={43}>
              <GroupBody>
                <BigButton $w={42}>
                  <BigIcon>
                    <svg width="20" height="20" viewBox="0 0 20 20">
                      <rect x="0.5" y="0.5" width="19" height="19" fill="#d0d0d0" stroke="#6a6a6a" />
                      <rect x="0.5" y="0.5" width="19" height="3" fill="#777" />
                      <path d="M1 8h18M1 14h18M7 4v15M13 4v15" stroke="#777" strokeWidth="0.6" />
                      <circle cx="10" cy="9.5" r="5.5" fill="#e8e8e8" stroke="#555" />
                      <path d="M8 11V9M10 11V7M12 11V8.5" stroke="#2f6fb5" strokeWidth="1.3" />
                    </svg>
                  </BigIcon>
                  <BigText>Analizar<span>datos</span></BigText>
                </BigButton>
              </GroupBody>
            </Group>

            <RibbonEnd><Chev s={11} c="#555" /></RibbonEnd>
          </Ribbon>

          <FormulaBar>
            <NameBox>I25 <ChevronDown size={10} color="#c8c8c8" /></NameBox>
            <DotsSlot>⋮</DotsSlot>
            <FormulaActions>
              <X size={10} color="#8a8a8a" />
              <Check size={10} color="#8a8a8a" />
              <span>fx</span>
            </FormulaActions>
            <FormulaInput><ChevronDown size={10} color="#a8a8a8" /></FormulaInput>
          </FormulaBar>

          <SheetArea>
            <Sheet>
              <HeaderRow>
                <Corner />
                {COLUMN_LETTERS.map((l) => (
                  <ColHead key={l}>{l}</ColHead>
                ))}
              </HeaderRow>
              <SheetRow $h={14.5}>
                <RowHead>1</RowHead>
                <TitleCell>RELACIÓN DE UBIGEOS LIMA-CALLAO</TitleCell>
                {EMPTY_COLUMNS.map((_, i) => <Cell key={i} />)}
              </SheetRow>
              <SheetRow $h={14.8}>
                <RowHead>2</RowHead>
                <HeadCell>DEPARTAMENTO</HeadCell>
                <HeadCell>PROVINCIA</HeadCell>
                <HeadCell>DISTRITO</HeadCell>
                <HeadCell $right>UBIGEO</HeadCell>
                {EMPTY_COLUMNS.map((_, i) => <Cell key={i} />)}
              </SheetRow>
              {PLACES.map((p, n) => (
                <SheetRow $h={13.27} key={p.d}>
                  <RowHead>{n + 3}</RowHead>
                  <Cell>{p.a}</Cell>
                  <Cell>{p.b}</Cell>
                  <Cell>{p.c}</Cell>
                  <Cell $flag>{p.d}</Cell>
                  {EMPTY_COLUMNS.map((_, i) => <Cell key={i} />)}
                </SheetRow>
              ))}
            </Sheet>
            <VScroll>
              <VTrack>
                <ScrollArrow $dir="up" />
                <VThumb />
                <ScrollArrow $dir="down" />
              </VTrack>
            </VScroll>
          </SheetArea>

          <TabBar>
            <NavArrows>
              <ChevronLeft size={11} />
              <ChevronRight size={11} />
            </NavArrows>
            <SheetTab>shippingRatesPriceList</SheetTab>
            <Slot $w={9} />
            <TabHandle />
            <ActiveTab>ubicacionGeografica</ActiveTab>
            <TabHandle />
            <AddSheet><Plus size={11} /></AddSheet>
            <HScrollDots>⋮</HScrollDots>
            <HScroll>
              <ScrollArrow $dir="left" />
              <HThumb />
              <ScrollArrow $dir="right" />
            </HScroll>
          </TabBar>
        </Excel>

        <Highlight />
        <ArrowMark width="30" height="62" viewBox="0 0 30 62">
          <defs>
            <linearGradient id="arrowFill" x1="0" y1="0" x2="0" y2="1">
              <stop offset="0" stopColor="#fdb0a8" />
              <stop offset="1" stopColor="#ff3f86" />
            </linearGradient>
            <filter id="arrowShadow" x="-30%" y="-10%" width="160%" height="120%">
              <feDropShadow dx="0" dy="1" stdDeviation="1.5" floodColor="#000" floodOpacity="0.25" />
            </filter>
          </defs>
          <path d="M11 2h8v39h9L15 61 2 41h9z" fill="url(#arrowFill)" filter="url(#arrowShadow)" />
        </ArrowMark>
      </Card>
    </>
  );
}
